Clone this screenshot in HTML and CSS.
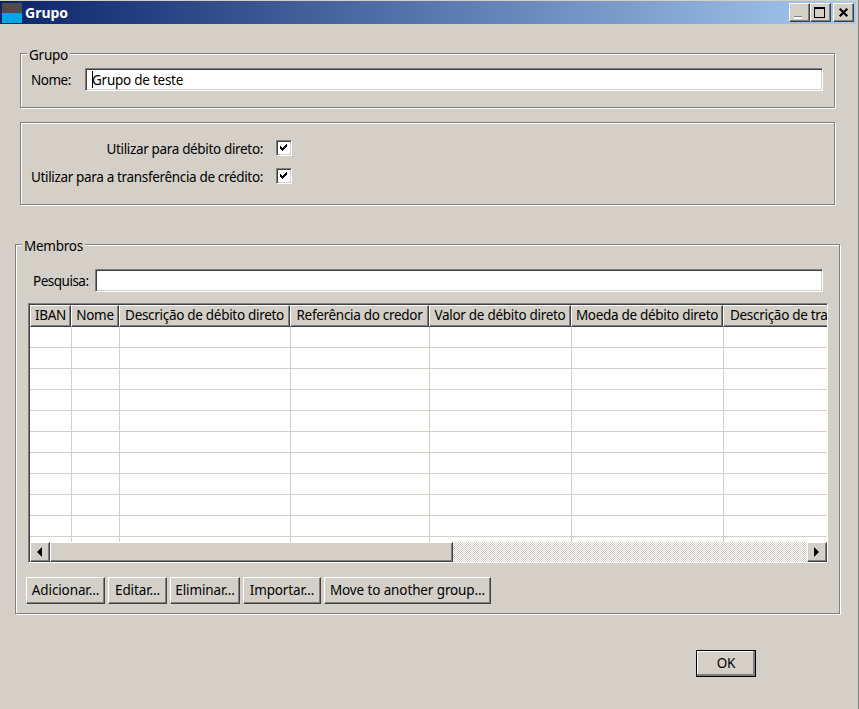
FILE: index.html
```html
<!DOCTYPE html>
<html lang="pt">
<head>
<meta charset="utf-8">
<title>Grupo</title>
<link rel="stylesheet" href="styles.css">
</head>
<body>
<div class="window">
  <header class="titlebar">
    <span class="app-icon"></span>
    <span class="title">Grupo</span>
    <div class="controls">
      <button class="ctl"><svg width="19" height="17" viewBox="0 0 19 17" shape-rendering="crispEdges"><rect x="4" y="12" width="8" height="1" fill="#808080"/><rect x="4" y="13" width="8" height="2" fill="#fff"/></svg></button>
      <button class="ctl"><svg width="19" height="17" viewBox="0 0 19 17" shape-rendering="crispEdges"><path d="M3 3h11v11H3ZM4 5v8h9V5Z" fill="#000" fill-rule="evenodd"/></svg></button>
      <button class="ctl close"><svg width="19" height="17" viewBox="0 0 19 17"><path d="M5.7 4.7L13.3 12.3M13.3 4.7L5.7 12.3" fill="none" stroke="#000" stroke-width="2.2"/></svg></button>
    </div>
  </header>
  <main class="content">
    <section class="group group-name">
      <span class="legend">Grupo</span>
      <div class="field">
        <label class="field-label name-label">Nome:</label>
        <div class="input name-input"><span class="caret"></span>Grupo de teste</div>
      </div>
    </section>
    <section class="group group-checks">
      <div class="check-row"><span class="check-label">Utilizar para débito direto:</span><span class="checkbox"><svg width="7" height="7" viewBox="0 0 7 7" shape-rendering="crispEdges"><path d="M0 2h1v1h1v1h1V3h1V2h1V1h1V0h1v3h-1v1h-1v1h-1v1h-1v1h-1V6h-1V5h-1Z" fill="#000"/></svg></span></div>
      <div class="check-row"><span class="check-label">Utilizar para a transferência de crédito:</span><span class="checkbox"><svg width="7" height="7" viewBox="0 0 7 7" shape-rendering="crispEdges"><path d="M0 2h1v1h1v1h1V3h1V2h1V1h1V0h1v3h-1v1h-1v1h-1v1h-1v1h-1V6h-1V5h-1Z" fill="#000"/></svg></span></div>
    </section>
    <section class="group group-members">
      <span class="legend">Membros</span>
      <div class="field search-field">
        <label class="field-label search-label">Pesquisa:</label>
        <div class="input search-input"></div>
      </div>
      <div class="grid-box">
        <div class="grid-inner">
          <div class="grid-head">
            <span class="th c1">IBAN</span><span class="th c2">Nome</span><span class="th c3">Descrição de débito direto</span><span class="th c4">Referência do credor</span><span class="th c5">Valor de débito direto</span><span class="th c6">Moeda de débito direto</span><span class="th c7">Descrição de transferência</span>
          </div>
          <div class="grid-body">
            <div class="tr"><i class="c1"></i><i class="c2"></i><i class="c3"></i><i class="c4"></i><i class="c5"></i><i class="c6"></i><i class="c7"></i></div>
            <div class="tr"><i class="c1"></i><i class="c2"></i><i class="c3"></i><i class="c4"></i><i class="c5"></i><i class="c6"></i><i class="c7"></i></div>
            <div class="tr"><i class="c1"></i><i class="c2"></i><i class="c3"></i><i class="c4"></i><i class="c5"></i><i class="c6"></i><i class="c7"></i></div>
            <div class="tr"><i class="c1"></i><i class="c2"></i><i class="c3"></i><i class="c4"></i><i class="c5"></i><i class="c6"></i><i class="c7"></i></div>
            <div class="tr"><i class="c1"></i><i class="c2"></i><i class="c3"></i><i class="c4"></i><i class="c5"></i><i class="c6"></i><i class="c7"></i></div>
            <div class="tr"><i class="c1"></i><i class="c2"></i><i class="c3"></i><i class="c4"></i><i class="c5"></i><i class="c6"></i><i class="c7"></i></div>
            <div class="tr"><i class="c1"></i><i class="c2"></i><i class="c3"></i><i class="c4"></i><i class="c5"></i><i class="c6"></i><i class="c7"></i></div>
            <div class="tr"><i class="c1"></i><i class="c2"></i><i class="c3"></i><i class="c4"></i><i class="c5"></i><i class="c6"></i><i class="c7"></i></div>
            <div class="tr"><i class="c1"></i><i class="c2"></i><i class="c3"></i><i class="c4"></i><i class="c5"></i><i class="c6"></i><i class="c7"></i></div>
            <div class="tr"><i class="c1"></i><i class="c2"></i><i class="c3"></i><i class="c4"></i><i class="c5"></i><i class="c6"></i><i class="c7"></i></div>
            <div class="tr"><i class="c1"></i><i class="c2"></i><i class="c3"></i><i class="c4"></i><i class="c5"></i><i class="c6"></i><i class="c7"></i></div>
          </div>
          <div class="hscroll">
            <span class="sb-btn"><svg width="6" height="10" viewBox="0 0 6 10"><path d="M5 0V10L0 5Z" fill="#000"/></svg></span>
            <span class="sb-thumb"></span>
            <span class="sb-track"></span>
            <span class="sb-btn"><svg width="6" height="10" viewBox="0 0 6 10"><path d="M0 0V10L5 5Z" fill="#000"/></svg></span>
          </div>
        </div>
      </div>
      <div class="actions">
        <button class="btn b-add">Adicionar...</button>
        <button class="btn b-edit">Editar...</button>
        <button class="btn b-del">Eliminar...</button>
        <button class="btn b-imp">Importar...</button>
        <button class="btn b-move">Move to another group...</button>
      </div>
    </section>
    <div class="footer"><button class="btn ok">OK</button></div>
  </main>
</div>
</body>
</html>
```
FILE: styles.css
```css
* { box-sizing: border-box; }
html, body { margin: 0; padding: 0; }
body {
  width: 859px;
  height: 709px;
  overflow: hidden;
  background: #d4d0c8;
  font-family: "Noto Sans", "DejaVu Sans", sans-serif;
  font-size: 13.5px;
  letter-spacing: -0.25px;
  color: #000;
}
.window {
  width: 859px;
  height: 709px;
  display: flex;
  flex-direction: column;
  padding-top: 1px;
  border-right: 1px solid #808080;
}
.titlebar {
  height: 23px;
  width: 856px;
  flex: none;
  display: flex;
  align-items: center;
  padding-left: 2px;
  background: linear-gradient(to right, #0a246a, #a6caf0);
}
.app-icon {
  width: 20px;
  height: 20px;
  background: linear-gradient(to bottom, #4d4d4d 50%, #00a6e3 50%);
}
.title {
  margin-left: 3px;
  color: #fff;
  font-weight: bold;
  font-size: 14px;
  letter-spacing: 0;
}
.controls {
  margin-left: auto;
  display: flex;
  padding-right: 2px;
}
.ctl {
  width: 21px;
  height: 19px;
  padding: 0;
  background: #d4d0c8;
  border: 1px solid;
  border-color: #fff #404040 #404040 #fff;
  box-shadow: inset -1px -1px 0 #808080;
  display: flex;
}
.close { margin-left: 2px; }
.content {
  flex: 1;
  display: flex;
  flex-direction: column;
  padding: 29px 0 0 15px;
}
.group {
  position: relative;
  border: 1px solid #808080;
  box-shadow: inset 1px 1px 0 #fff, 1px 1px 0 #fff;
}
.legend {
  position: absolute;
  top: -8px;
  left: 6px;
  padding: 0 2px;
  background: #d4d0c8;
  line-height: 18px;
}
.group-name {
  width: 815px;
  height: 55px;
  margin-left: 5px;
  padding: 14px 0 0 10px;
}
.field { display: flex; align-items: center; }
.field-label { flex: none; letter-spacing: -0.5px; }
.name-label { width: 54px; }
.search-label { width: 62px; }
.input {
  height: 23px;
  background: #fff;
  border: 1px solid;
  border-color: #808080 #fff #fff #808080;
  box-shadow: inset 1px 1px 0 #404040, inset -1px -1px 0 #d4d0c8;
  line-height: 23px;
  position: relative;
}
.name-input { width: 738px; padding-left: 6px; }
.caret {
  position: absolute;
  left: 6px;
  top: 2px;
  width: 1px;
  height: 17px;
  background: #000;
}
.group-checks {
  width: 815px;
  height: 83px;
  margin: 14px 0 0 5px;
  padding: 17px 0 0 0;
  display: flex;
  flex-direction: column;
  gap: 12px;
}
.check-row { display: flex; align-items: center; height: 16px; }
.check-label {
  width: 242px;
  padding-top: 2px;
  text-align: right;
  letter-spacing: -0.34px;
  white-space: nowrap;
}
.checkbox {
  width: 16px;
  height: 16px;
  margin-left: 13px;
  padding: 3px 0 0 3px;
  background: #fff;
  border: 1px solid;
  border-color: #808080 #fff #fff #808080;
  box-shadow: inset 1px 1px 0 #404040, inset -1px -1px 0 #d4d0c8;
}
.checkbox svg { display: block; }
.group-members {
  width: 825px;
  height: 370px;
  margin-top: 39px;
  padding: 24px 0 0 0;
}
.search-field { padding-left: 17px; }
.search-input { width: 728px; }
.grid-box {
  width: 800px;
  height: 260px;
  margin: 11px 0 0 12px;
  border: 1px solid;
  border-color: #808080 #fff #fff #808080;
}
.grid-inner {
  height: 100%;
  background: #fff;
  border-style: solid;
  border-width: 1px 0 0 1px;
  border-color: #404040;
  overflow: hidden;
  display: flex;
  flex-direction: column;
}
.grid-head, .tr { display: flex; flex: none; }
.c1 { width: 41px; }
.c2 { width: 48px; }
.c3 { width: 171px; }
.c4 { width: 139px; }
.c5 { width: 142px; }
.c6 { width: 152px; }
.c7 { width: 160px; }
.tr i.c1 { width: 42px; }
.grid-head { height: 22px; }
.th {
  flex: none;
  background: #d4d0c8;
  border: 1px solid;
  border-color: #fff #404040 #404040 #fff;
  box-shadow: inset -1px -1px 0 #808080;
  white-space: nowrap;
  text-align: center;
  line-height: 19px;
  letter-spacing: -0.3px;
  overflow: hidden;
}
.th.c7 { text-align: left; padding-left: 6px; }
.grid-body { flex: 1; overflow: hidden; }
.tr { height: 21px; border-bottom: 1px solid #d4d0c8; }
.tr i { flex: none; border-right: 1px solid #d4d0c8; }
.hscroll { flex: none; height: 20px; display: flex; }
.sb-btn, .sb-thumb {
  background: #d4d0c8;
  border: 1px solid;
  border-color: #fff #404040 #404040 #fff;
  box-shadow: inset -1px -1px 0 #808080;
}
.sb-btn {
  width: 20px;
  flex: none;
  display: flex;
  align-items: center;
  justify-content: center;
}
.sb-thumb { width: 403px; flex: none; }
.sb-track {
  flex: 1;
  background-color: #fff;
  background-image: repeating-conic-gradient(#d4d0c8 0 25%, #fff 0 50%);
  background-size: 2px 2px;
}
.actions {
  display: flex;
  gap: 3px;
  margin: 14px 0 0 10px;
}
.btn {
  height: 27px;
  padding: 0 0 2px;
  font: inherit;
  letter-spacing: -0.12px;
  color: #000;
  background: #d4d0c8;
  border: 1px solid;
  border-color: #fff #404040 #404040 #fff;
  box-shadow: inset -1px -1px 0 #808080;
}
.b-add { width: 79px; }
.b-edit { width: 59px; }
.b-del { width: 70px; }
.b-imp { width: 78px; }
.b-move { width: 167px; }
.footer {
  display: flex;
  padding: 36px 0 0 681px;
}
.ok {
  width: 60px;
  border-color: #000;
  box-shadow: inset -2px -2px 0 #808080, inset 1px 1px 0 #fff;
}
```
